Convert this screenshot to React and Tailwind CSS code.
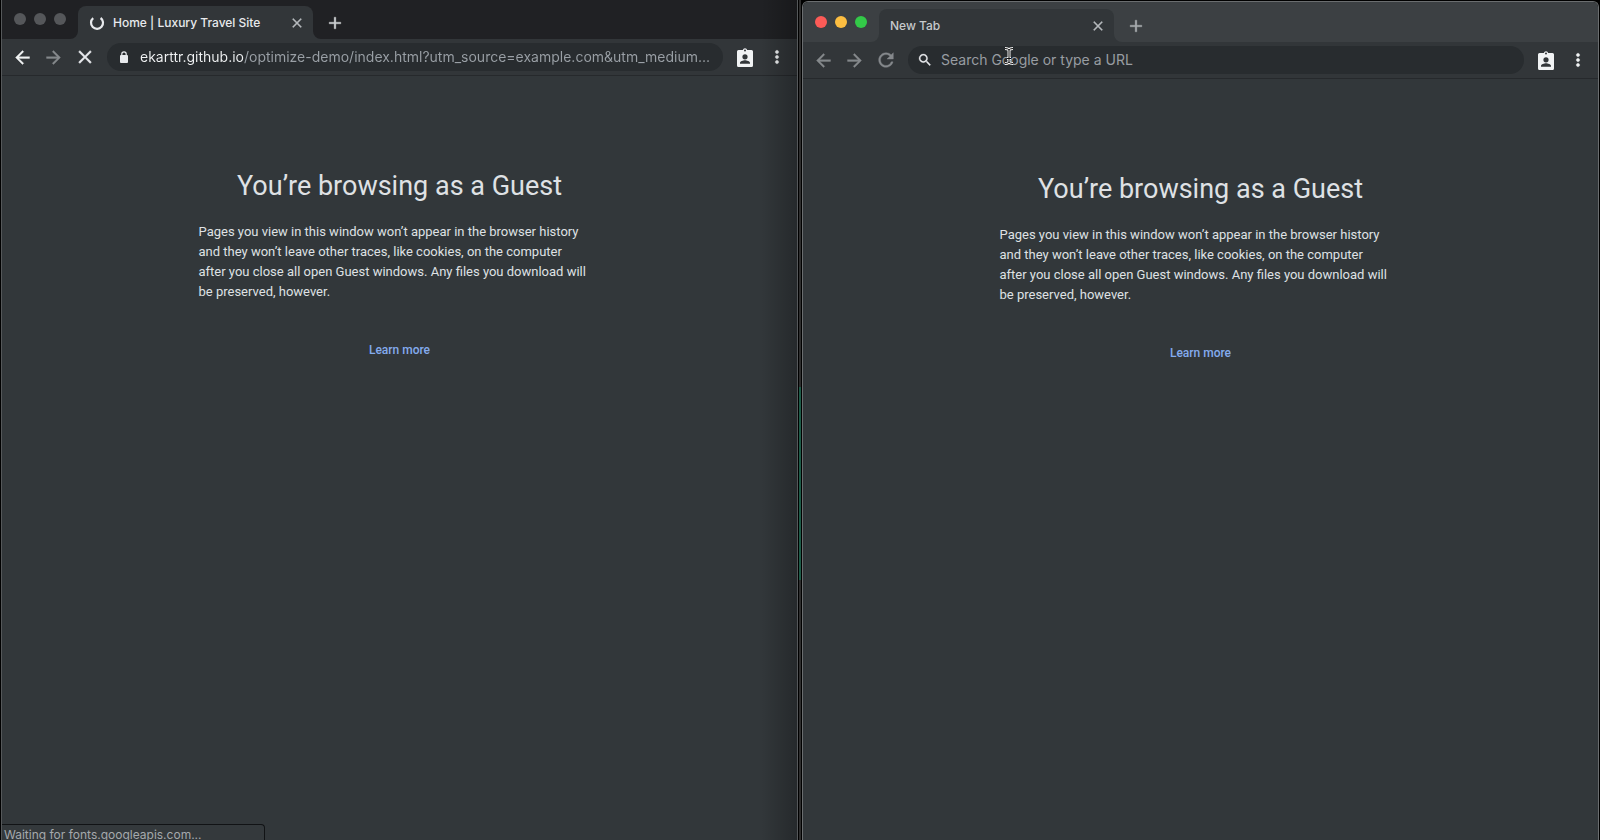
import React from 'react';

const PATHS = {
  back: 'M20 11H7.83l5.59-5.59L12 4l-8 8 8 8 1.41-1.41L7.83 13H20v-2z',
  forward: 'M12 4l-1.41 1.41L16.17 11H4v2h12.17l-5.58 5.59L12 20l8-8z',
  close: 'M19 6.41L17.59 5 12 10.59 6.41 5 5 6.41 10.59 12 5 17.59 6.41 19 12 13.41 17.59 19 19 17.59 13.41 12z',
  reload:
    'M17.65 6.35C16.2 4.9 14.21 4 12 4c-4.42 0-7.99 3.58-7.99 8s3.57 8 7.99 8c3.73 0 6.84-2.55 7.73-6h-2.08c-.82 2.33-3.04 4-5.65 4-3.31 0-6-2.69-6-6s2.69-6 6-6c1.66 0 3.14.69 4.22 1.78L13 11h7V4l-2.35 2.35z',
  add: 'M19 13h-6v6h-2v-6H5v-2h6V5h2v6h6v2z',
  search:
    'M15.5 14h-.79l-.28-.27C15.41 12.59 16 11.11 16 9.5 16 5.91 13.09 3 9.5 3S3 5.91 3 9.5 5.91 16 9.5 16c1.61 0 3.09-.59 4.23-1.57l.27.28v.79l5 4.99L20.49 19l-4.99-5zm-6 0C7.01 14 5 11.99 5 9.5S7.01 5 9.5 5 14 7.01 14 9.5 11.99 14 9.5 14z',
  more: 'M12 8c1.1 0 2-.9 2-2s-.9-2-2-2-2 .9-2 2 .9 2 2 2zm0 2c-1.1 0-2 .9-2 2s.9 2 2 2 2-.9 2-2-.9-2-2-2zm0 6c-1.1 0-2 .9-2 2s.9 2 2 2 2-.9 2-2-.9-2-2-2z',
};

function Icon({ name, className }) {
  return (
    <svg
      viewBox="0 0 24 24"
      fill="currentColor"
      stroke="currentColor"
      strokeWidth="0.4"
      aria-hidden="true"
      className={'shrink-0 ' + className}
    >
      <path d={PATHS[name]} />
    </svg>
  );
}

function GuestBadge() {
  return (
    <svg viewBox="0 0 16 19" aria-hidden="true" className="h-[19px] w-4 shrink-0">
      <path
        fill="#f1f3f4"
        fillRule="evenodd"
        d="M1.5 2H5.8a2.3 2.3 0 0 1 4.4 0H14.5a1.5 1.5 0 0 1 1.5 1.5v14a1.5 1.5 0 0 1-1.5 1.5H1.5a1.5 1.5 0 0 1-1.5-1.5v-14A1.5 1.5 0 0 1 1.5 2zM8 1.5a1 1 0 1 0 0 2 1 1 0 0 0 0-2zM8 6.2a2.6 2.6 0 1 0 0 5.2 2.6 2.6 0 0 0 0-5.2zM3 15.8h10v-.9c0-1.7-3.3-2.6-5-2.6s-5 .9-5 2.6z"
      />
    </svg>
  );
}

function Lock() {
  return (
    <svg viewBox="0 0 10 12" aria-hidden="true" className="h-3 w-[10px] shrink-0">
      <rect x="1" y="4" width="8" height="8" rx="1" fill="#e8eaed" />
      <path d="M2.8 5V3a2.2 2.2 0 0 1 4.4 0v2" fill="none" stroke="#e8eaed" strokeWidth="1.2" />
    </svg>
  );
}

function Spinner() {
  return (
    <svg viewBox="0 0 16 16" aria-hidden="true" className="size-4 shrink-0">
      <path d="M4.2 3.2A6 6 0 1 0 11.6 3" fill="none" stroke="#e8eaed" strokeWidth="2.2" />
    </svg>
  );
}

function TextCursor() {
  const beam = 'M2 2.5q3 0 4 1.5q1-1.5 4-1.5M6 4v12M2 17.5q3 0 4-1.5q1 1.5 4 1.5M4 12.5h4';
  return (
    <svg viewBox="0 0 12 20" aria-hidden="true" className="pointer-events-none absolute -top-1 left-[62px] h-5 w-3">
      <path d={beam} fill="none" stroke="#f5f5f5" strokeWidth="3" />
      <path d={beam} fill="none" stroke="#111" strokeWidth="1" />
    </svg>
  );
}

function TabStrip({ title, loading, active }) {
  const lights = active ? ['bg-[#fc5b57]', 'bg-[#fdbe41]', 'bg-[#33c948]'] : ['bg-[#55575a]', 'bg-[#55575a]', 'bg-[#55575a]'];
  const strip = active ? 'bg-[#3c4043] pt-[7px]' : 'bg-[#202124] pt-[6px]';
  return (
    <div className={'flex items-stretch pl-3 ' + strip}>
      <div className="flex h-[25px] items-center gap-2">
        {['Close window', 'Minimize window', 'Zoom window'].map((label, i) => (
          <button key={label} aria-label={label} className={'size-3 rounded-full ' + lights[i]} />
        ))}
      </div>
      <svg viewBox="0 0 8 8" aria-hidden="true" className="ml-1 size-2 shrink-0 self-end text-[#323639]">
        <path d="M8 0v8H0a8 8 0 0 0 8-8z" fill="currentColor" />
      </svg>
      <div className="flex h-[33px] w-[235px] items-center gap-2 rounded-t-lg bg-[#323639] pr-2 pl-[11px]">
        {loading && <Spinner />}
        <span className={'flex-1 truncate text-[12px] leading-4 font-medium ' + (active ? 'text-[#c6c9cc]' : 'text-[#e8eaed]')}>{title}</span>
        <button aria-label="Close tab" className="text-[#b4b8bb]">
          <Icon name="close" className="size-4" />
        </button>
      </div>
      <svg viewBox="0 0 8 8" aria-hidden="true" className="size-2 shrink-0 self-end text-[#323639]">
        <path d="M0 0v8h8a8 8 0 0 1-8-8z" fill="currentColor" />
      </svg>
      <button aria-label="New tab" className={'ml-1 ' + (active ? 'text-[#a9adb0]' : 'text-[#d0d3d6]')}>
        <Icon name="add" className="size-5" />
      </button>
    </div>
  );
}

function Toolbar({ loading, children }) {
  return (
    <div className="flex h-[37px] items-center border-b border-[#26292c] bg-[#323639] px-[10px]">
      <div className="flex items-center gap-[10px] text-[#85898c]">
        <button aria-label="Back" className={loading ? 'text-[#f1f3f4]' : ''}>
          <Icon name="back" className="size-[21px]" />
        </button>
        <button aria-label="Forward">
          <Icon name="forward" className="size-[21px]" />
        </button>
        <button aria-label={loading ? 'Stop' : 'Reload'} className={loading ? 'text-[#e8eaed]' : ''}>
          <Icon name={loading ? 'close' : 'reload'} className="size-[22px]" />
        </button>
      </div>
      <div className="ml-[11px] flex h-7 min-w-0 flex-1 items-center rounded-full bg-[#282c2f] pr-2">{children}</div>
      <button aria-label="Guest profile" className="ml-[14px]">
        <GuestBadge />
      </button>
      <button aria-label="Menu" className="ml-[14px] text-[#f1f3f4]">
        <Icon name="more" className="size-5" />
      </button>
    </div>
  );
}

function GuestPage() {
  return (
    <main className="flex-1 bg-[#32373a] px-4 pt-[92px] font-[Roboto,sans-serif] text-[#dfe1e4]">
      <div className="mx-auto w-full max-w-[402px]">
        <h1 className="text-center text-[27px] leading-9">You’re browsing as a Guest</h1>
        <p className="mt-[18px] pr-3 text-[13px] leading-5">
          Pages you view in this window won’t appear in the browser history and they won’t leave other traces, like cookies, on the computer
          after you close all open Guest windows. Any files you download will be preserved, however.
        </p>
        <p className="mt-[38px] text-center text-[12px] leading-5 font-medium">
          <a href="#learn-more" className="text-[#84abee]">
            Learn more
          </a>
        </p>
      </div>
    </main>
  );
}

export default function App() {
  return (
    <div className="relative grid h-screen grid-cols-2 gap-1 overflow-hidden bg-black px-px font-[Inter,sans-serif]">
      <section aria-label="Background window" className="relative flex min-w-0 flex-col overflow-hidden border-x border-[#55585a]">
        <TabStrip title="Home | Luxury Travel Site" loading />
        <Toolbar loading>
          <label htmlFor="address" className="flex w-[33px] shrink-0 justify-center" aria-label="Address">
            <Lock />
          </label>
          <input
            id="address"
            readOnly
            value="ekarttr.github.io/optimize-demo/index.html?utm_source=example.com&utm_medium..."
            className="min-w-0 flex-1 bg-linear-to-r from-[#f1f3f4] from-[104px] to-[#9aa0a6] to-[104px] bg-clip-text text-[14px] leading-5 text-transparent outline-none"
          />
        </Toolbar>
        <GuestPage />
        <div className="pointer-events-none absolute inset-y-0 right-0 w-9 bg-linear-to-r from-transparent to-black/25" />
        <div role="status" className="absolute bottom-0 left-0 h-4 w-[263px] overflow-hidden rounded-tr border-t border-r border-[#111315] bg-[#34393c] pl-[2px] text-[12px] leading-5 text-[#a5a9ac]">
          Waiting for fonts.googleapis.com...
        </div>
      </section>
      <div className="pointer-events-none absolute inset-y-0 left-1/2 flex w-[2px] -translate-x-px flex-col bg-[#2e2e2e]">
        <div className="mt-[387px] h-[193px] bg-[#1d5c48]" />
      </div>
      <section aria-label="Active window" className="mt-px flex min-w-0 flex-col overflow-hidden rounded-t-md border-x border-t border-[#6a6d6f]">
        <TabStrip title="New Tab" active />
        <Toolbar>
          <label htmlFor="search" className="flex w-[33px] shrink-0 justify-center pl-px text-[#e8eaed]" aria-label="Search">
            <Icon name="search" className="size-4" />
          </label>
          <div className="relative flex min-w-0 flex-1 items-center">
            <input
              id="search"
              type="text"
              placeholder="Search Google or type a URL"
              className="w-full min-w-0 bg-transparent text-[14px] leading-5 text-[#e8eaed] outline-none placeholder:text-[#989da2]"
            />
            <TextCursor />
          </div>
        </Toolbar>
        <GuestPage />
      </section>
    </div>
  );
}
